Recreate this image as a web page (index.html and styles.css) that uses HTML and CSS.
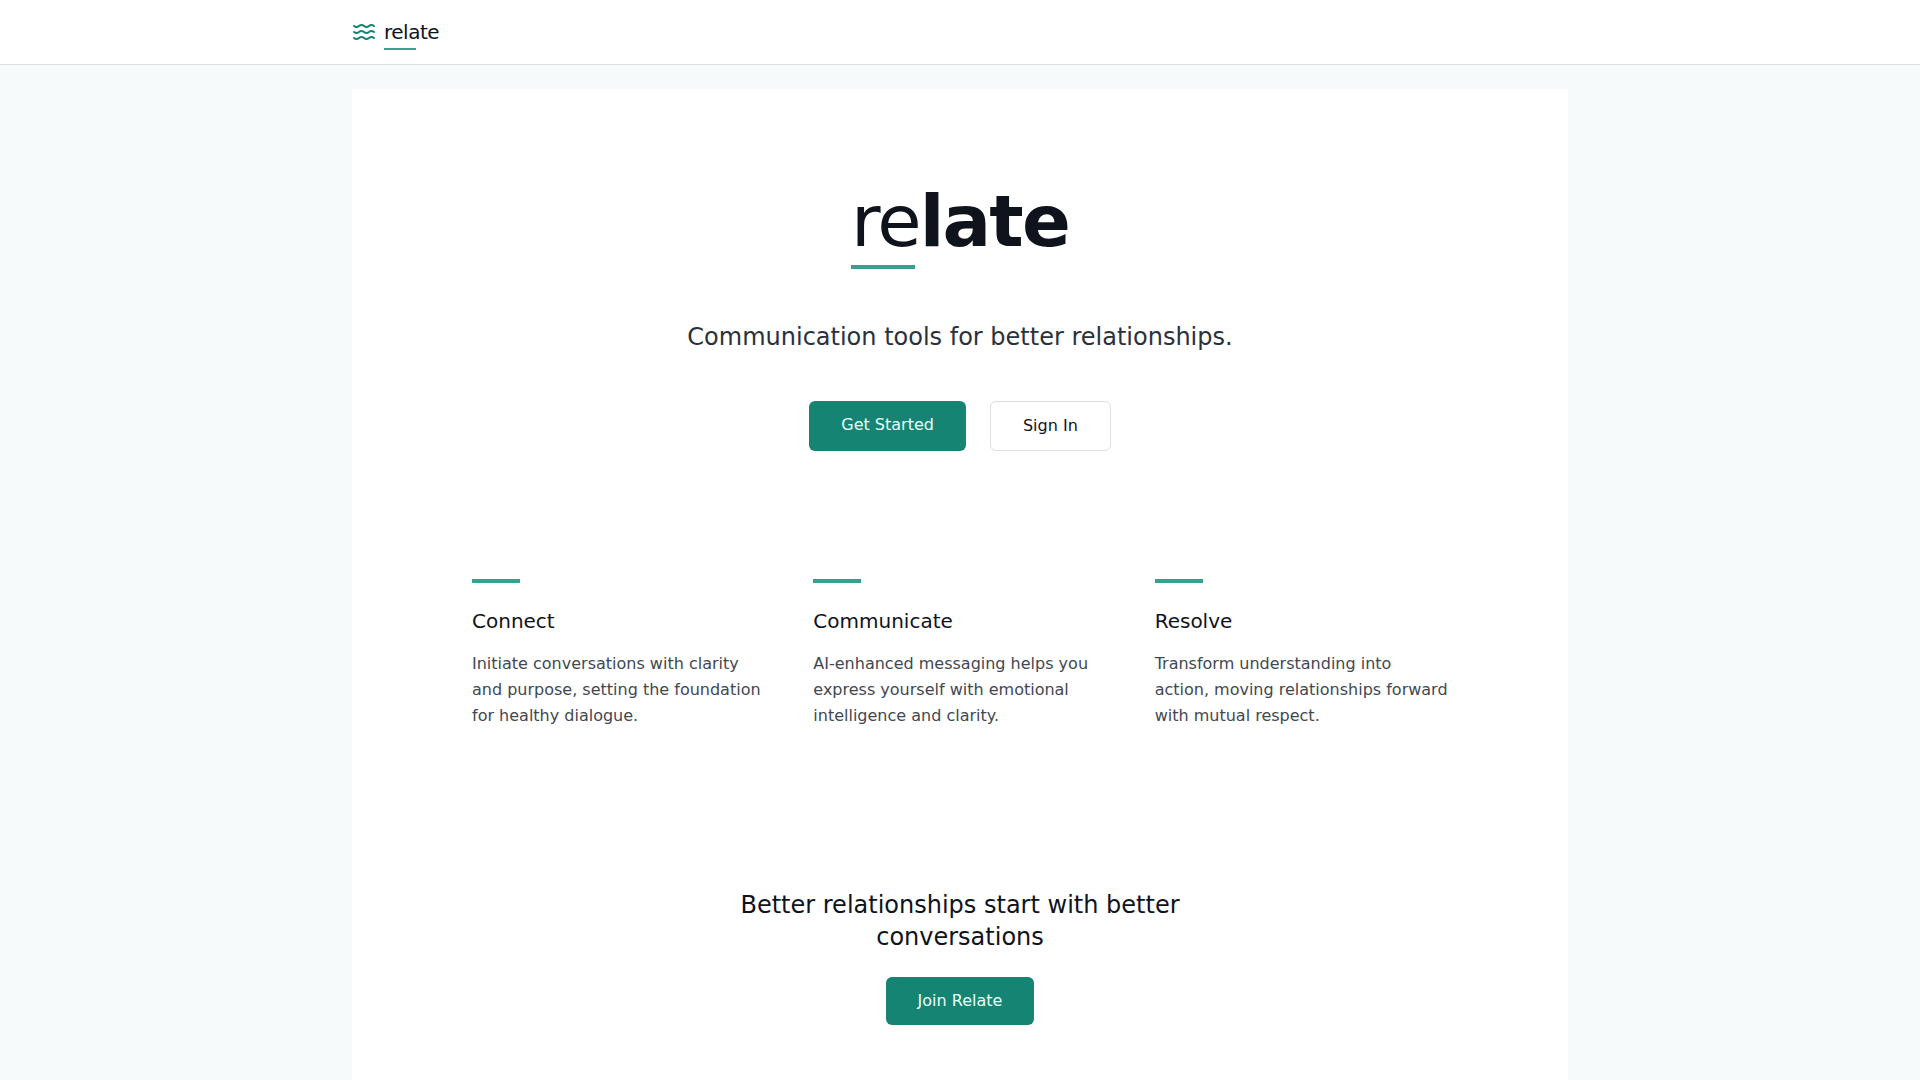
FILE: index.html
```html
<!DOCTYPE html>
<html lang="en">
<head>
  <meta charset="utf-8">
  <meta name="viewport" content="width=device-width, initial-scale=1">
  <title>relate</title>
  <link rel="stylesheet" href="styles.css">
</head>
<body>
  <header class="site-header">
    <div class="container site-header-inner">
      <a class="brand" href="#">
        <svg class="brand-icon" viewBox="0 0 24 24" width="24" height="24" aria-hidden="true">
          <path d="M2 6c.6.5 1.2 1 2.5 1C7 7 7 5 9.5 5c2.6 0 2.4 2 5 2 2.5 0 2.5-2 5-2 1.3 0 1.9.5 2.5 1"/>
          <path d="M2 12c.6.5 1.2 1 2.5 1 2.5 0 2.5-2 5-2 2.6 0 2.4 2 5 2 2.5 0 2.5-2 5-2 1.3 0 1.9.5 2.5 1"/>
          <path d="M2 18c.6.5 1.2 1 2.5 1 2.5 0 2.5-2 5-2 2.6 0 2.4 2 5 2 2.5 0 2.5-2 5-2 1.3 0 1.9.5 2.5 1"/>
        </svg>
        <span class="brand-name">relate</span>
      </a>
    </div>
  </header>

  <main class="container page">
    <div class="sheet">
      <section class="hero">
        <h1 class="hero-title">re<strong>late</strong></h1>
        <p class="hero-tagline">Communication tools for better relationships.</p>
        <div class="hero-actions">
          <a class="button button-primary" href="#">Get Started</a>
          <a class="button button-outline" href="#">Sign In</a>
        </div>
      </section>

      <section class="features">
        <article class="feature">
          <h2 class="feature-title">Connect</h2>
          <p class="feature-text">Initiate conversations with clarity and purpose, setting the foundation for healthy dialogue.</p>
        </article>
        <article class="feature">
          <h2 class="feature-title">Communicate</h2>
          <p class="feature-text">AI-enhanced messaging helps you express yourself with emotional intelligence and clarity.</p>
        </article>
        <article class="feature">
          <h2 class="feature-title">Resolve</h2>
          <p class="feature-text">Transform understanding into action, moving relationships forward with mutual respect.</p>
        </article>
      </section>

      <section class="join">
        <h2 class="join-title">Better relationships start with better conversations</h2>
        <a class="button button-primary" href="#">Join Relate</a>
      </section>
    </div>
  </main>
</body>
</html>
```

FILE: styles.css
```css
:root {
  --ink: #0f131c;
  --ink-soft: #2a313c;
  --ink-muted: #414852;
  --teal: #168473;
  --teal-light: #38a08e;
  --line: #dcdfe4;
  --canvas: #f6fafb;
}

* {
  box-sizing: border-box;
}

body {
  margin: 0;
  background: var(--canvas);
  color: var(--ink);
  font-family: "DejaVu Sans", sans-serif;
  font-size: 16px;
  line-height: 24px;
}

h1,
h2,
p {
  margin: 0;
  font-weight: 400;
}

a {
  color: inherit;
  text-decoration: none;
}

.container {
  max-width: 1280px;
  margin: 0 auto;
  padding: 0 32px;
}

/* Header */
.site-header {
  background: #fff;
  border-bottom: 1px solid var(--line);
}

.site-header-inner {
  display: flex;
  align-items: center;
  height: 64px;
}

.brand {
  display: flex;
  align-items: center;
  gap: 8px;
}

.brand-icon {
  fill: none;
  stroke: var(--teal);
  stroke-width: 2;
  stroke-linecap: round;
  stroke-linejoin: round;
}

.brand-name {
  position: relative;
  font-size: 20px;
  line-height: 28px;
  letter-spacing: -0.025em;
}

.brand-name::after {
  content: "";
  position: absolute;
  left: 0;
  bottom: -4px;
  width: 32px;
  height: 2px;
  background: var(--teal-light);
}

/* Page */
.page {
  padding-top: 24px;
  padding-bottom: 24px;
}

.sheet {
  background: #fff;
}

/* Hero */
.hero {
  display: flex;
  flex-direction: column;
  align-items: center;
  padding: 96px 32px;
  text-align: center;
}

.hero-title {
  position: relative;
  margin-bottom: 64px;
  font-size: 72px;
  line-height: 72px;
  letter-spacing: -0.025em;
}

.hero-title::after {
  content: "";
  position: absolute;
  left: 0;
  bottom: -12px;
  width: 64px;
  height: 4px;
  background: var(--teal-light);
}

.hero-tagline {
  margin-bottom: 48px;
  color: var(--ink-soft);
  font-size: 24px;
  line-height: 32px;
}

.hero-actions {
  display: flex;
  flex-wrap: wrap;
  justify-content: center;
  gap: 24px;
}

.button {
  padding: 12px 32px;
  border-radius: 6px;
}

.button-primary {
  background: var(--teal);
  color: #e6fffa;
}

.button-outline {
  border: 1px solid var(--line);
}

/* Features */
.features {
  display: grid;
  grid-template-columns: repeat(3, 1fr);
  gap: 48px;
  max-width: 1024px;
  margin: 0 auto;
  padding: 32px 24px;
}

.feature::before {
  content: "";
  display: block;
  width: 48px;
  height: 4px;
  margin-bottom: 24px;
  background: var(--teal-light);
}

.feature-title {
  margin-bottom: 16px;
  font-size: 20px;
  line-height: 28px;
}

.feature-text {
  color: var(--ink-muted);
  line-height: 26px;
}

/* Closing call to action */
.join {
  display: flex;
  flex-direction: column;
  align-items: center;
  gap: 24px;
  max-width: 576px;
  margin: 0 auto;
  padding: 128px 0 96px;
  text-align: center;
}

.join-title {
  font-size: 24px;
  line-height: 32px;
}

@media (max-width: 800px) {
  .features {
    grid-template-columns: 1fr;
  }
}
```
